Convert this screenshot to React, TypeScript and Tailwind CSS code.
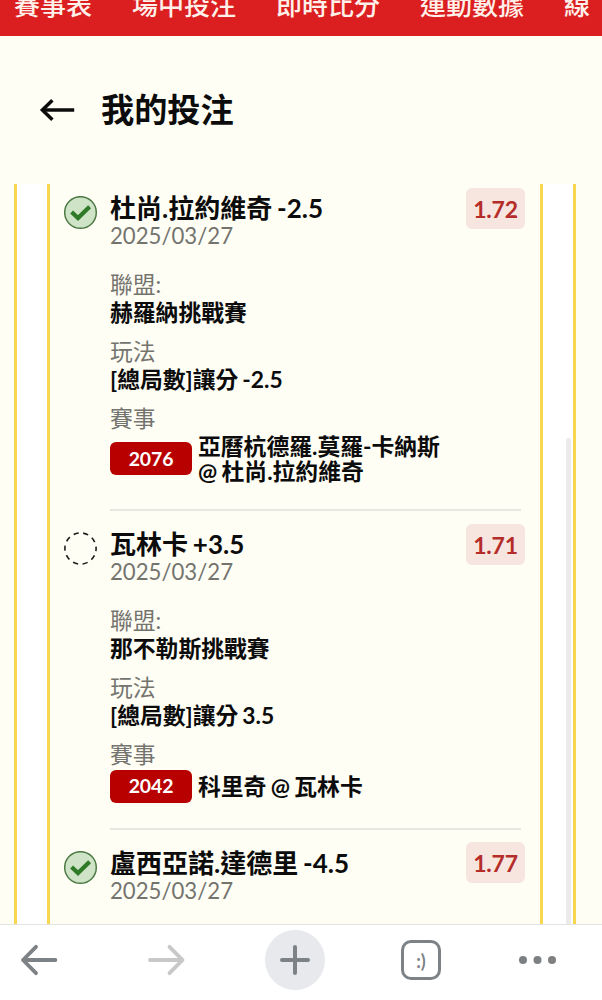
import React from 'react';

type Bet = {
  title: string;
  date: string;
  odds: string;
  won: boolean;
  league?: string;
  play?: string;
  code?: string;
  match?: string[];
};

const tabs = ['賽事表', '場中投注', '即時比分', '運動數據', '線'];

const bets: Bet[] = [
  {
    title: '杜尚.拉約維奇 -2.5',
    date: '2025/03/27',
    odds: '1.72',
    won: true,
    league: '赫羅納挑戰賽',
    play: '[總局數]讓分 -2.5',
    code: '2076',
    match: ['亞曆杭德羅.莫羅-卡納斯', '@ 杜尚.拉約維奇'],
  },
  {
    title: '瓦林卡 +3.5',
    date: '2025/03/27',
    odds: '1.71',
    won: false,
    league: '那不勒斯挑戰賽',
    play: '[總局數]讓分 3.5',
    code: '2042',
    match: ['科里奇 @ 瓦林卡'],
  },
  { title: '盧西亞諾.達德里 -4.5', date: '2025/03/27', odds: '1.77', won: true },
];

function StatusIcon({ won }: { won: boolean }) {
  return won ? (
    <svg width="34" height="34" viewBox="0 0 34 34" fill="none">
      <circle cx="16.5" cy="16.5" r="15.8" fill="#cfe3c6" stroke="#4c7a45" strokeWidth="1.5" />
      <path d="M7.6 16 L14 22 L25.6 10.8" stroke="#2f7a26" strokeWidth="4.2" />
    </svg>
  ) : (
    <svg width="34" height="34" viewBox="0 0 34 34" fill="none">
      <circle cx="16.5" cy="16.5" r="15.6" stroke="#1c1c1a" strokeWidth="1.6" strokeDasharray="5.2 4.6" strokeDashoffset="2.6" />
    </svg>
  );
}

function Field({ label, value }: { label: string; value: string }) {
  return (
    <div className="text-[22.8px] leading-[28px]">
      <div className="text-[#74746f]">{label}</div>
      <div className="font-bold [word-spacing:-1.5px]">{value}</div>
    </div>
  );
}

function BetItem({ bet, first }: { bet: Bet; first: boolean }) {
  return (
    <div className={first ? 'flex pt-[9px]' : 'flex pt-[18px]'}>
      <div className="w-[46px] shrink-0 pt-[3px]">
        <StatusIcon won={bet.won} />
      </div>
      <div className="w-[411px] shrink-0">
        <div className="flex h-[30px] items-center justify-between">
          <div className="text-[26px] leading-[30px] font-bold [word-spacing:-1.5px]">{bet.title}</div>
          <div className="-mr-[4px] flex h-[41px] w-[59px] items-center justify-center rounded-[6px] bg-[#f7e5e0] pt-[2px] text-[23px] font-bold tracking-[-0.2px] text-[#b52d28]">
            {bet.odds}
          </div>
        </div>
        <div className="h-[26px] text-[22.2px] leading-[26px] text-[#74746f]">{bet.date}</div>
        {bet.league && bet.play && bet.match && (
          <div className="mt-[21px] flex flex-col gap-[11px] border-b-2 border-[#e9e7e0] pb-[25px]">
            <Field label="聯盟:" value={bet.league} />
            <Field label="玩法" value={bet.play} />
            <div className="text-[22.8px]">
              <div className="leading-[28px] text-[#74746f]">賽事</div>
              <div className={bet.match.length > 1 ? 'flex items-center gap-[6px] pt-[1px]' : 'flex items-center gap-[6px] pt-[1.5px]'}>
                <div className="flex h-[33px] w-[82px] items-center justify-center rounded-[6px] bg-[#b90000] text-[19.4px] font-bold tracking-[-0.1px] text-white">
                  {bet.code}
                </div>
                <div className="pt-[1px] leading-[25px] font-bold whitespace-nowrap [word-spacing:-1.2px]">
                  {bet.match.map((line) => (
                    <div key={line}>{line}</div>
                  ))}
                </div>
              </div>
            </div>
          </div>
        )}
      </div>
    </div>
  );
}

export default function App() {
  return (
    <div className="flex h-[1000px] w-[602px] flex-col overflow-hidden bg-[#fffef5] font-['Lato','Noto_Sans_CJK_TC',sans-serif] text-[#0c0c0c]">
      <nav className="flex h-[36px] shrink-0 items-end gap-[40px] overflow-hidden bg-[#db1f20] pb-[16px] pl-[14px] text-[26px] leading-[30px] font-medium whitespace-nowrap text-[#fff0ea]">
        {tabs.map((tab) => (
          <div key={tab} className="shrink-0">
            {tab}
          </div>
        ))}
      </nav>

      <header className="flex h-[146px] shrink-0 items-center gap-[25px] pl-[39px]">
        <svg className="mt-[2px]" width="37" height="26" viewBox="0 0 37 26" fill="none" stroke="#0c0c0c" strokeWidth="3.5">
          <path d="M35.2 13 H3" />
          <path d="M13.4 3.2 L3.4 13 L13.4 22.8" />
        </svg>
        <h1 className="text-[33.2px] leading-[40px] font-bold">我的投注</h1>
      </header>

      <main className="relative mt-[2px] flex min-h-0 flex-1 overflow-hidden pl-[14px]">
        <div className="flex h-full w-[562px] border-x-3 border-[#f7d750] bg-white pl-[30px]">
          <div className="w-[496px] shrink-0 overflow-hidden border-x-3 border-[#f7d750] bg-[#fffef5] pl-[14px]">
            {bets.map((bet, i) => (
              <BetItem key={bet.title} bet={bet} first={i === 0} />
            ))}
          </div>
        </div>
        <div className="absolute top-[254px] left-[566px] h-[486px] w-[5px] rounded-t-full bg-[#ebebeb]" />
      </main>

      <footer className="flex h-[76px] shrink-0 items-start border-t border-[#e3e3e3] bg-white pt-[5px] pl-[20px]">
        <div className="flex h-[60px] items-center">
          <svg width="38" height="32" viewBox="0 0 38 32" fill="none" stroke="#7d8287" strokeWidth="3.8" strokeLinecap="round" strokeLinejoin="round">
            <path d="M35.4 16 H3 M16 2.8 L3 16 L16 29.2" />
          </svg>
          <svg className="ml-[90px]" width="38" height="32" viewBox="0 0 38 32" fill="none" stroke="#c8c8c8" strokeWidth="3.8" strokeLinecap="round" strokeLinejoin="round">
            <path d="M2 16 H34.5 M21.5 2.8 L34.5 16 L21.5 29.2" />
          </svg>
          <div className="ml-[79px] flex size-[60px] items-center justify-center rounded-full bg-[#e8e9ed]">
            <svg width="32" height="32" viewBox="0 0 32 32" fill="none" stroke="#7d8287" strokeWidth="4" strokeLinecap="round">
              <path d="M16 3 V29 M3 16 H29" />
            </svg>
          </div>
          <div className="ml-[76px] flex size-[40px] items-center justify-center rounded-[10px] border-3 border-[#7d8287] pt-[1px] text-[18px] leading-[20px] font-bold text-[#7d8287]">
            :)
          </div>
          <svg className="ml-[76px]" width="40" height="10" viewBox="0 0 40 10" fill="#7d8082">
            <circle cx="6" cy="5" r="4" />
            <circle cx="20.5" cy="5" r="4" />
            <circle cx="35" cy="5" r="4" />
          </svg>
        </div>
      </footer>
    </div>
  );
}
